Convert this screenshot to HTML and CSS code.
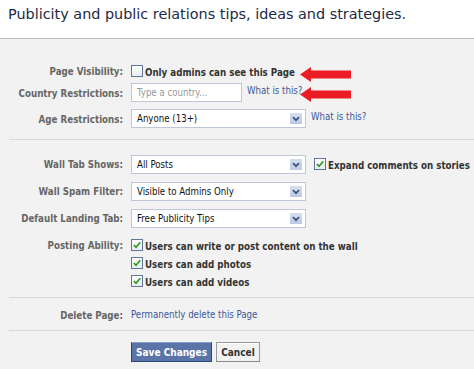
FILE: index.html
```html
<!DOCTYPE html>
<html>
<head>
<meta charset="utf-8">
<link rel="stylesheet" href="styles.css">
</head>
<body>
<div class="header">
  <h1 class="title">Publicity and public relations tips, ideas and strategies.</h1>
</div>
<div class="content">
  <div class="section s1">
    <div class="row r-vis">
      <div class="label">Page Visibility:</div>
      <div class="field">
        <span class="check"><span class="box"></span><span class="ctext">Only admins can see this Page</span></span>
      </div>
    </div>
    <div class="row r-country">
      <div class="label">Country Restrictions:</div>
      <div class="field top">
        <span class="input">Type a country...</span>
        <a class="link">What is this?</a>
      </div>
    </div>
    <div class="row r-age">
      <div class="label">Age Restrictions:</div>
      <div class="field top">
        <span class="select">Anyone (13+)<span class="dd"><svg width="8" height="6" viewBox="0 0 8 6"><path d="M1 1.2 L4 4.2 L7 1.2" fill="none" stroke="#3f5580" stroke-width="1.8"/></svg></span></span>
        <a class="link">What is this?</a>
      </div>
    </div>
  </div>

  <div class="section s2">
    <div class="row r-sel">
      <div class="label">Wall Tab Shows:</div>
      <div class="field top">
        <span class="select">All Posts<span class="dd"><svg width="8" height="6" viewBox="0 0 8 6"><path d="M1 1.2 L4 4.2 L7 1.2" fill="none" stroke="#3f5580" stroke-width="1.8"/></svg></span></span>
        <span class="check side"><span class="box"><svg width="10" height="10" viewBox="0 0 10 10"><path d="M1.8 5 L4 7.3 L8.3 2.2" fill="none" stroke="#2f9a20" stroke-width="1.7"/></svg></span><span class="ctext">Expand comments on stories</span></span>
      </div>
    </div>
    <div class="row r-sel">
      <div class="label">Wall Spam Filter:</div>
      <div class="field top">
        <span class="select">Visible to Admins Only<span class="dd"><svg width="8" height="6" viewBox="0 0 8 6"><path d="M1 1.2 L4 4.2 L7 1.2" fill="none" stroke="#3f5580" stroke-width="1.8"/></svg></span></span>
      </div>
    </div>
    <div class="row r-sel">
      <div class="label">Default Landing Tab:</div>
      <div class="field top">
        <span class="select">Free Publicity Tips<span class="dd"><svg width="8" height="6" viewBox="0 0 8 6"><path d="M1 1.2 L4 4.2 L7 1.2" fill="none" stroke="#3f5580" stroke-width="1.8"/></svg></span></span>
      </div>
    </div>
    <div class="row r-chk first">
      <div class="label">Posting Ability:</div>
      <div class="field">
        <span class="check"><span class="box"><svg width="10" height="10" viewBox="0 0 10 10"><path d="M1.8 5 L4 7.3 L8.3 2.2" fill="none" stroke="#2f9a20" stroke-width="1.7"/></svg></span><span class="ctext">Users can write or post content on the wall</span></span>
      </div>
    </div>
    <div class="row r-chk">
      <div class="label"></div>
      <div class="field">
        <span class="check"><span class="box"><svg width="10" height="10" viewBox="0 0 10 10"><path d="M1.8 5 L4 7.3 L8.3 2.2" fill="none" stroke="#2f9a20" stroke-width="1.7"/></svg></span><span class="ctext">Users can add photos</span></span>
      </div>
    </div>
    <div class="row r-chk">
      <div class="label"></div>
      <div class="field">
        <span class="check"><span class="box"><svg width="10" height="10" viewBox="0 0 10 10"><path d="M1.8 5 L4 7.3 L8.3 2.2" fill="none" stroke="#2f9a20" stroke-width="1.7"/></svg></span><span class="ctext">Users can add videos</span></span>
      </div>
    </div>
  </div>

  <div class="section s3">
    <div class="row r-del">
      <div class="label">Delete Page:</div>
      <div class="field">
        <a class="link plain">Permanently delete this Page</a>
      </div>
    </div>
  </div>

  <div class="buttons">
    <button class="btn save">Save Changes</button>
    <button class="btn cancel">Cancel</button>
  </div>
</div>

<svg class="arrow a1" width="54" height="19" viewBox="0 0 54 19"><polygon points="1,9.5 12,2 12,5.5 52,5.5 52,13.5 12,13.5 12,17" fill="#ec1c24"/></svg>
<svg class="arrow a2" width="54" height="19" viewBox="0 0 54 19"><polygon points="1,9.5 12,2 12,5.5 52,5.5 52,13.5 12,13.5 12,17" fill="#ec1c24"/></svg>
</body>
</html>
```

FILE: styles.css
```css
html, body {
  margin: 0;
  padding: 0;
}
body {
  position: relative;
  width: 474px;
  height: 369px;
  overflow: hidden;
  background: #f2f2f2;
  font-family: "DejaVu Sans Condensed", "DejaVu Sans", sans-serif;
  font-stretch: condensed;
  font-size: 9.6px;
  color: #333;
}
.header {
  background: #fff;
  height: 39px;
  border-bottom: 1px solid #bdbdbd;
  box-sizing: border-box;
}
.title {
  margin: 0;
  padding: 5px 0 0 8px;
  font-family: "DejaVu Sans", sans-serif;
  font-stretch: normal;
  font-size: 14.4px;
  line-height: 18px;
  font-weight: normal;
  color: #1c2a47;
  white-space: nowrap;
}
.section {
  margin-left: 9px;
  border-bottom: 1px solid #d9d9d9;
}
.s1 { padding: 22px 0 10px; }
.s2 { padding: 15px 0 7px; }
.s3 { padding: 8px 0 6px; }
.row {
  display: flex;
  align-items: center;
  height: 20px;
  white-space: nowrap;
}
.r-country { margin-top: 2px; }
.r-age { margin-top: 6px; }
.r-sel { height: 19px; margin-bottom: 8px; }
.r-chk { height: 18px; }
.r-del { height: 18px; }
.label {
  flex: none;
  width: 114px;
  text-align: right;
  font-weight: bold;
  font-size: 9.7px;
  color: #666;
}
.field {
  margin-left: 8px;
  display: flex;
  align-items: center;
  height: 100%;
}
.field.top { align-items: flex-start; }
.check {
  display: flex;
  align-items: flex-end;
}
.box {
  flex: none;
  width: 10px;
  height: 10px;
  border: 1px solid #5f7497;
  background: linear-gradient(#fff, #e9ecf1);
  margin: 0 2px 3px 0;
  display: flex;
}
.ctext {
  font-weight: bold;
  font-size: 9.7px;
  line-height: 14px;
  padding-top: 4px;
  color: #333;
}
.side { margin-left: 8px; }
.input, .select {
  box-sizing: border-box;
  height: 19px;
  border: 1px solid #bdc7d8;
  background: #fff;
  padding-left: 5px;
  display: flex;
  align-items: center;
}
.input {
  width: 111px;
  color: #999;
}
.select {
  width: 175px;
  color: #111;
  position: relative;
  justify-content: space-between;
  padding-right: 3px;
}
.dd {
  width: 12px;
  height: 11px;
  background: linear-gradient(#d6dfef, #bccae4);
  display: flex;
  align-items: center;
  justify-content: center;
}
.link {
  color: #3b5998;
  margin-left: 5px;
  line-height: 14px;
  padding-top: 1px;
}
.link.plain {
  margin-left: 0;
  padding-top: 0;
}
.buttons {
  display: flex;
  gap: 4px;
  padding: 11px 0 0 131px;
}
.btn {
  box-sizing: border-box;
  height: 20px;
  font-family: inherit;
  font-stretch: condensed;
  font-weight: bold;
  font-size: 10px;
  padding: 0;
  margin: 0;
  white-space: nowrap;
}
.save {
  width: 81px;
  background: #5b74a8;
  color: #fff;
  border: 1px solid;
  border-color: #8a9cc2 #29447e #29447e #29447e;
}
.cancel {
  width: 44px;
  background: #f2f2f2;
  color: #333;
  border: 1px solid;
  border-color: #999 #999 #888 #999;
  box-shadow: inset 0 1px 0 #fff;
}
.arrow {
  position: absolute;
  left: 299px;
}
.a1 { top: 65px; }
.a2 { top: 85px; }
```
